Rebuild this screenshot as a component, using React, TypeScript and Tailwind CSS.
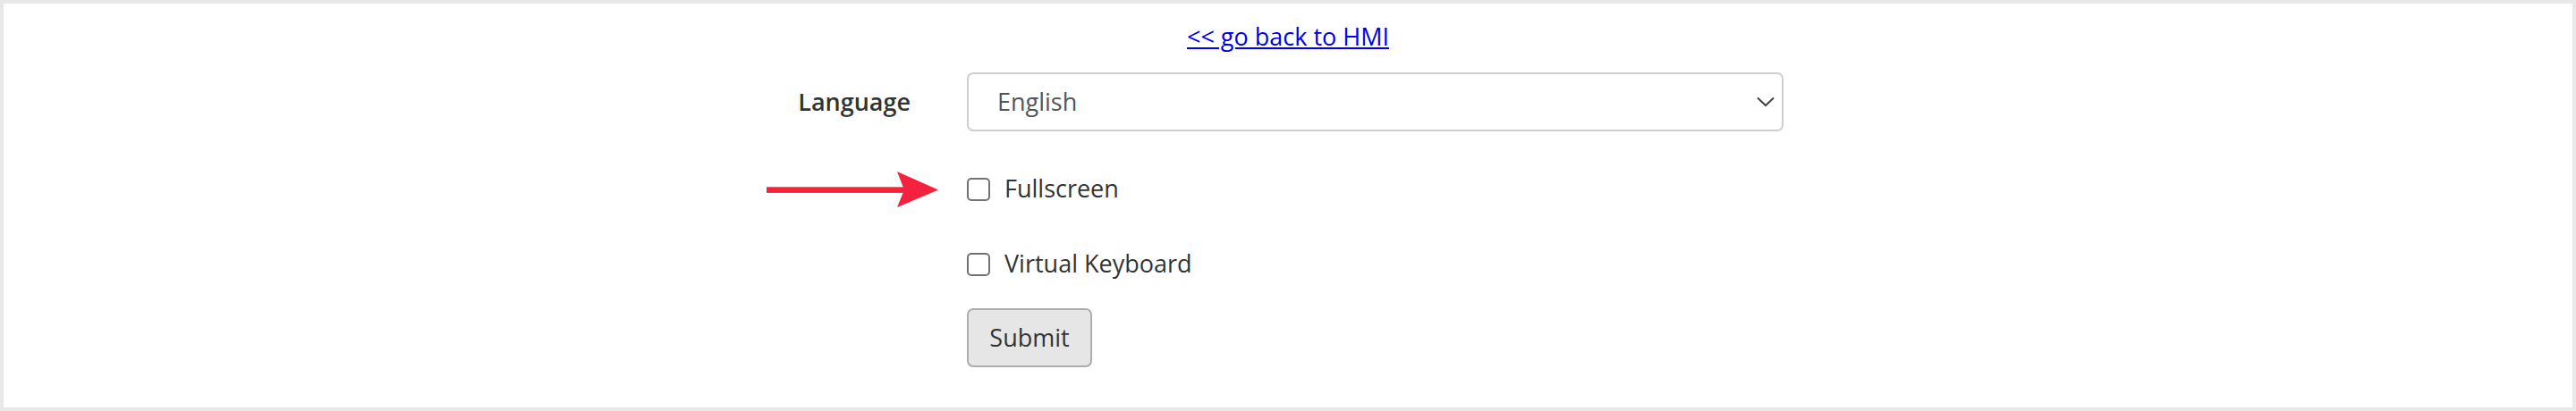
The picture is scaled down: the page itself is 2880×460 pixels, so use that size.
import React from "react";

const font = { fontFamily: '"Open Sans", "Noto Sans", sans-serif' };

function Checkbox() {
  return (
    <span className="block w-[26px] h-[26px] shrink-0 rounded-[5px] border-2 border-[#727272] bg-white" />
  );
}

export default function App() {
  return (
    <div className="w-[2880px] h-[460px] bg-[#e8e8e8] p-[4px] overflow-hidden" style={font}>
      <div className="h-full bg-white flex flex-col">
        <div className="mt-[17px] text-center text-[27px] leading-[39px]">
          <a href="#" className="text-[#0000ee] underline">
            &lt;&lt; go back to HMI
          </a>
        </div>

        <div className="mt-[21px] flex items-center h-[66px]">
          <div className="w-[1077px] pr-[63px] text-right text-[27px] font-semibold text-[#333]">
            Language
          </div>
          <div className="w-[913px] h-[66px] rounded-[7px] border-2 border-[#cfcfcf] flex items-center justify-between pl-[32px] pr-[8px] bg-white">
            <span className="text-[27px] text-[#555]">English</span>
            <svg width="20" height="12" viewBox="0 0 20 12">
              <path d="M1 1.5 L10 10 L19 1.5" fill="none" stroke="#444" strokeWidth="2" />
            </svg>
          </div>
        </div>

        <div className="mt-[52px] flex items-center h-[26px]">
          <div className="w-[1077px] pr-[32px] flex justify-end">
            <svg width="192" height="40" viewBox="0 0 192 40">
              <rect x="0" y="17.3" width="156" height="6.6" fill="#f5223f" />
              <polygon points="146,0 192,20.5 146,40 154,20.5" fill="#f5223f" />
            </svg>
          </div>
          <Checkbox />
          <span className="ml-[16px] text-[27px] leading-[26px] text-[#333] -translate-y-[1px]">Fullscreen</span>
        </div>

        <div className="mt-[58px] flex items-center h-[26px]">
          <div className="w-[1077px]" />
          <Checkbox />
          <span className="ml-[16px] text-[27px] leading-[26px] text-[#333] -translate-y-[1px]">Virtual Keyboard</span>
        </div>

        <div className="mt-[36px] flex">
          <div className="w-[1077px]" />
          <button className="w-[140px] h-[66px] rounded-[7px] border-2 border-[#adadad] bg-[#e6e6e6] text-[27px] leading-[60px] text-[#333]">
            Submit
          </button>
        </div>
      </div>
    </div>
  );
}
